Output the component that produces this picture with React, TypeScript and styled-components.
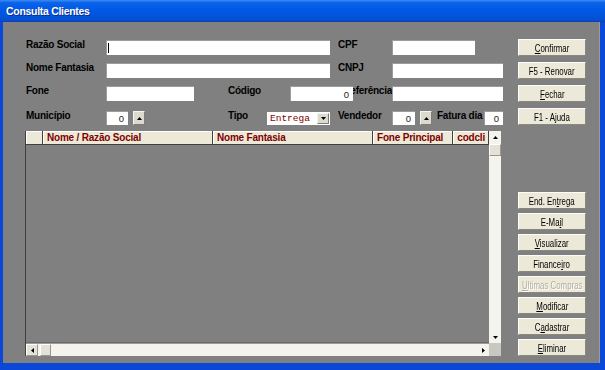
import React from 'react';
import styled, { createGlobalStyle } from 'styled-components';

const GlobalStyle = createGlobalStyle`
  html, body {
    margin: 0;
    padding: 0;
    background: #808080;
  }
  body {
    font-family: "Liberation Sans", Arial, sans-serif;
  }
`;

const Window = styled.div`
  width: 605px;
  height: 370px;
  display: flex;
  flex-direction: column;
  overflow: hidden;
`;

const TitleBar = styled.div`
  height: 22px;
  flex-shrink: 0;
  display: flex;
  align-items: center;
  padding-left: 6px;
  background: linear-gradient(to bottom, #3c8cf6 0%, #0b63ea 12%, #0058e4 45%, #0054dc 75%, #0a4ccc 92%, #0a3eb2 100%);
`;

const Title = styled.span`
  color: #fff;
  font-size: 10.5px;
  font-weight: bold;
  letter-spacing: -0.3px;
  text-shadow: 1px 1px 0 #0a2f8a;
`;

const Frame = styled.div`
  flex: 1;
  display: flex;
  background: #808080;
  border-left: 3px solid #0b48d8;
  border-right: 5px solid #0b48d8;
  border-bottom: 7px solid #0b48d8;
  box-shadow: inset -1px 0 0 #9a9a9a;
  padding: 17px 0 7px 22px;
  gap: 17px;
`;

const Main = styled.div`
  width: 476px;
  display: flex;
  flex-direction: column;
`;

const Form = styled.div`
  display: flex;
  flex-direction: column;
  padding-left: 1px;
  margin-top: 1px;
`;

const Row = styled.div<{ $mt?: number; $h?: number }>`
  display: flex;
  align-items: center;
  height: ${(p) => p.$h ?? 15}px;
  margin-top: ${(p) => p.$mt ?? 0}px;
`;

const Label = styled.span<{ $w: number; $ml?: number }>`
  width: ${(p) => p.$w}px;
  margin-left: ${(p) => p.$ml ?? 0}px;
  flex-shrink: 0;
  align-self: flex-start;
  margin-top: -1px;
  font-size: 10px;
  line-height: 12px;
  font-weight: bold;
  letter-spacing: -0.25px;
  color: #000;
  white-space: nowrap;
`;

/* "Referência" sits partly under the Código box in the original form */
const ClipLabel = styled(Label)`
  display: flex;
  justify-content: flex-end;
  overflow: hidden;
`;

const TextBox = styled.div<{ $w: number; $ml?: number; $caret?: boolean }>`
  position: relative;
  width: ${(p) => p.$w}px;
  height: 100%;
  margin-left: ${(p) => p.$ml ?? 0}px;
  flex-shrink: 0;
  box-sizing: border-box;
  background: #fff;
  border-top: 1px solid #9c9c9c;
  border-left: 1px solid #9c9c9c;
  display: flex;
  align-items: center;
  justify-content: flex-end;
  padding-right: 4px;
  font-size: 9.5px;
  color: #222;

  ${(p) =>
    p.$caret &&
    `&::before {
      content: '';
      position: absolute;
      left: 1px;
      top: 2px;
      bottom: 2px;
      width: 1px;
      background: #000;
    }`}
`;

const SpinButton = styled.div<{ $ml?: number }>`
  width: 12px;
  height: 14px;
  margin-left: ${(p) => p.$ml ?? 0}px;
  flex-shrink: 0;
  box-sizing: border-box;
  background: #dcd9cf;
  border: 1px solid;
  border-color: #f4f4f0 #7e7c74 #7e7c74 #f4f4f0;
  display: flex;
  align-items: center;
  justify-content: center;
`;

const Combo = styled.div`
  width: 63px;
  height: 13px;
  flex-shrink: 0;
  box-sizing: border-box;
  background: #fff;
  display: flex;
  align-items: center;
  justify-content: space-between;
  padding: 0 1px 0 3px;
`;

const ComboText = styled.span`
  font-family: "Liberation Mono", "Courier New", monospace;
  font-size: 9.5px;
  color: #800000;
`;

const ComboButton = styled.div`
  width: 12px;
  height: 11px;
  box-sizing: border-box;
  background: #dcd9cf;
  border: 1px solid;
  border-color: #f4f4f0 #7e7c74 #7e7c74 #f4f4f0;
  display: flex;
  align-items: center;
  justify-content: center;
`;

const Grid = styled.div`
  flex: 1;
  margin-top: 6px;
  display: grid;
  grid-template-columns: 1fr 12px;
  grid-template-rows: 1fr 13px;
  border-left: 1px solid #404040;
`;

const Table = styled.div`
  display: flex;
  flex-direction: column;
  border-bottom: 1px solid #6a6a6a;
`;

const HeaderRow = styled.div`
  display: flex;
  height: 13px;
  background: #ece9d8;
  border-bottom: 1px solid #404040;
`;

const HeaderCell = styled.div<{ $w: number; $right?: boolean }>`
  width: ${(p) => p.$w}px;
  flex-shrink: 0;
  box-sizing: border-box;
  border-right: 1px solid #404040;
  box-shadow: inset 1px 1px 0 #fff;
  padding: ${(p) => (p.$right ? '0 3px 0 0' : '0 0 0 4px')};
  font-size: 10px;
  line-height: 13px;
  font-weight: bold;
  letter-spacing: -0.2px;
  color: #800000;
  white-space: nowrap;
  overflow: hidden;
  text-align: ${(p) => (p.$right ? 'right' : 'left')};
`;

const TableBody = styled.div`
  flex: 1;
  background: #808080;
`;

const VScroll = styled.div`
  display: flex;
  flex-direction: column;
  background: #f4f3ee;
`;

const HScroll = styled.div`
  display: flex;
  align-items: stretch;
  background: #f4f3ee;
  border-top: 1px solid #9a9a9a;
`;

const ScrollTrack = styled.div`
  flex: 1;
`;

const ScrollBtn = styled.div<{ $h?: number; $w?: number; $ml?: number; $flat?: boolean }>`
  width: ${(p) => p.$w ?? 12}px;
  height: ${(p) => p.$h ?? 13}px;
  margin-left: ${(p) => p.$ml ?? 0}px;
  flex-shrink: 0;
  box-sizing: border-box;
  background: ${(p) => (p.$flat ? '#f4f3ee' : '#e4e2d8')};
  border: ${(p) => (p.$flat ? 'none' : '1px solid')};
  border-color: #fff #9a988e #9a988e #fff;
  display: flex;
  align-items: center;
  justify-content: center;
`;

const Corner = styled.div`
  background: #c9c8c0;
`;

const Side = styled.div`
  width: 68px;
  display: flex;
  flex-direction: column;
`;

const ButtonGroup = styled.div<{ $gap: number; $mt?: number }>`
  display: flex;
  flex-direction: column;
  gap: ${(p) => p.$gap}px;
  margin-top: ${(p) => p.$mt ?? 0}px;
`;

const Button = styled.div<{ $disabled?: boolean }>`
  height: 17px;
  box-sizing: border-box;
  background: #ece9d8;
  border: 1px solid;
  border-color: #fcfcfa #8a887e #8a887e #fcfcfa;
  display: flex;
  align-items: center;
  justify-content: center;
  white-space: nowrap;
  color: ${(p) => (p.$disabled ? '#b2ae9e' : '#000')};
  text-shadow: ${(p) => (p.$disabled ? '1px 1px 0 #fff' : 'none')};
`;

/* the captions in the original are tall and narrow */
const ButtonText = styled.span`
  display: inline-block;
  font-size: 10.5px;
  line-height: 12px;
  transform: scaleX(0.75);

  u {
    text-decoration: underline;
    text-underline-offset: 1px;
  }
`;

type Dir = 'up' | 'down' | 'left' | 'right';

const Arrow: React.FC<{ dir: Dir }> = ({ dir }) => {
  const points: Record<Dir, string> = {
    up: '0,4 5,4 2.5,1',
    down: '0,1 5,1 2.5,4',
    left: '4,0 4,5 1,2.5',
    right: '1,0 1,5 4,2.5',
  };
  return (
    <svg width={5} height={5} viewBox="0 0 5 5">
      <polygon points={points[dir]} fill="#000" />
    </svg>
  );
};

const columns = [
  { title: '', width: 17 },
  { title: 'Nome / Razão Social', width: 170 },
  { title: 'Nome Fantasia', width: 160 },
  { title: 'Fone Principal', width: 80 },
  { title: 'codcli', width: 36, right: true },
];

const topButtons: React.ReactNode[] = [
  <><u>C</u>onfirmar</>,
  'F5 - Renovar',
  <><u>F</u>echar</>,
  'F1 - Ajuda',
];

const bottomButtons: { label: React.ReactNode; disabled?: boolean }[] = [
  { label: <>End. En<u>t</u>rega</> },
  { label: <>E-Ma<u>i</u>l</> },
  { label: <><u>V</u>isualizar</> },
  { label: <>Finance<u>i</u>ro</> },
  { label: <><u>U</u>ltimas Compras</>, disabled: true },
  { label: <><u>M</u>odificar</> },
  { label: <>C<u>a</u>dastrar</> },
  { label: <><u>E</u>liminar</> },
];

const App: React.FC = () => {
  return (
    <>
      <GlobalStyle />
      <Window>
        <TitleBar>
          <Title>Consulta Clientes</Title>
        </TitleBar>
        <Frame>
          <Main>
            <Form>
              <Row>
                <Label $w={80}>Razão Social</Label>
                <TextBox $w={224} $caret />
                <Label $w={54} $ml={8}>CPF</Label>
                <TextBox $w={83} />
              </Row>
              <Row $mt={8}>
                <Label $w={80}>Nome Fantasia</Label>
                <TextBox $w={224} />
                <Label $w={54} $ml={8}>CNPJ</Label>
                <TextBox $w={111} />
              </Row>
              <Row $mt={8}>
                <Label $w={80}>Fone</Label>
                <TextBox $w={88} />
                <Label $w={62} $ml={34}>Código</Label>
                <TextBox $w={63}>0</TextBox>
                <ClipLabel $w={39}>Referência</ClipLabel>
                <TextBox $w={111} />
              </Row>
              <Row $mt={10} $h={14}>
                <Label $w={80}>Município</Label>
                <TextBox $w={22}>0</TextBox>
                <SpinButton $ml={5}><Arrow dir="up" /></SpinButton>
                <Label $w={39} $ml={83}>Tipo</Label>
                <Combo>
                  <ComboText>Entrega</ComboText>
                  <ComboButton><Arrow dir="down" /></ComboButton>
                </Combo>
                <Label $w={54} $ml={8}>Vendedor</Label>
                <TextBox $w={23}>0</TextBox>
                <SpinButton $ml={5}><Arrow dir="up" /></SpinButton>
                <Label $w={47} $ml={5}>Fatura dia</Label>
                <TextBox $w={19}>0</TextBox>
              </Row>
            </Form>

            <Grid>
              <Table>
                <HeaderRow>
                  {columns.map((col) => (
                    <HeaderCell key={col.title || 'indicator'} $w={col.width} $right={col.right}>
                      {col.title}
                    </HeaderCell>
                  ))}
                </HeaderRow>
                <TableBody />
              </Table>
              <VScroll>
                <ScrollBtn $flat><Arrow dir="up" /></ScrollBtn>
                <ScrollBtn $h={12} />
                <ScrollTrack />
                <ScrollBtn $flat $h={12}><Arrow dir="down" /></ScrollBtn>
              </VScroll>
              <HScroll>
                <ScrollBtn $h={12}><Arrow dir="left" /></ScrollBtn>
                <ScrollBtn $w={11} $h={12} $ml={2} />
                <ScrollTrack />
                <ScrollBtn $flat $h={12}><Arrow dir="right" /></ScrollBtn>
              </HScroll>
              <Corner />
            </Grid>
          </Main>

          <Side>
            <ButtonGroup $gap={6}>
              {topButtons.map((label, i) => (
                <Button key={i}><ButtonText>{label}</ButtonText></Button>
              ))}
            </ButtonGroup>
            <ButtonGroup $gap={4} $mt={67}>
              {bottomButtons.map((btn, i) => (
                <Button key={i} $disabled={btn.disabled}>
                  <ButtonText>{btn.label}</ButtonText>
                </Button>
              ))}
            </ButtonGroup>
          </Side>
        </Frame>
      </Window>
    </>
  );
};

export default App;
